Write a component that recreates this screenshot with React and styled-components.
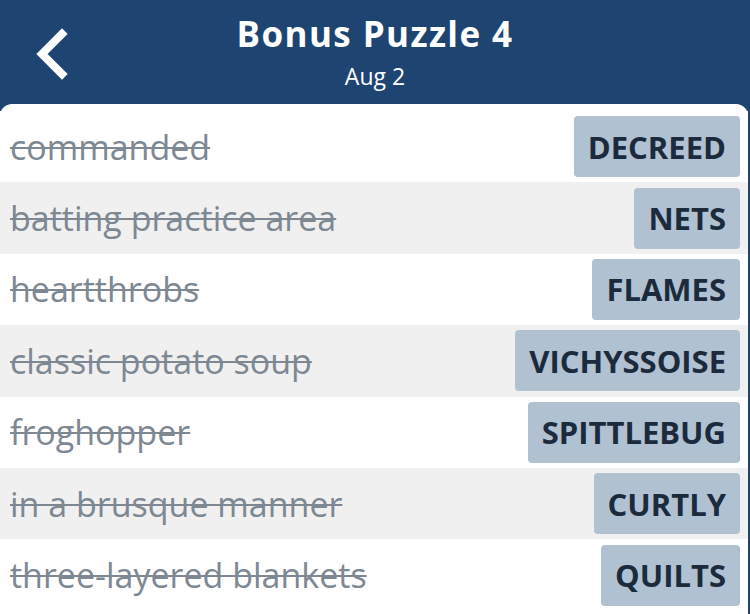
import React from "react";
import styled, { createGlobalStyle } from "styled-components";

const GlobalStyle = createGlobalStyle`
  html, body {
    margin: 0;
    padding: 0;
    background: #1e4571;
    font-family: "Open Sans", "Noto Sans", sans-serif;
  }
`;

const Screen = styled.div`
  width: 750px;
  height: 614px;
  overflow: hidden;
  background: #1e4571;
  display: flex;
  flex-direction: column;
`;

const Header = styled.header`
  height: 104px;
  display: flex;
  flex-direction: column;
  align-items: center;
  position: relative;
  color: #fff;
`;

const BackBtn = styled.button`
  position: absolute;
  left: 30px;
  top: 26px;
  width: 48px;
  height: 56px;
  border: none;
  background: none;
  padding: 0;
  cursor: pointer;
`;

const Title = styled.h1`
  margin: 11px 0 0 0;
  font-size: 35px;
  font-weight: 700;
  line-height: 46px;
  letter-spacing: 1.4px;
`;

const Sub = styled.div`
  font-size: 23px;
  line-height: 28px;
  margin-top: 5px;
`;

const Card = styled.main`
  flex: 1;
  width: 748px;
  background: #fff;
  border-radius: 12px 12px 0 0;
  padding-top: 7px;
`;

const Row = styled.div`
  height: 71.4px;
  box-sizing: border-box;
  display: flex;
  align-items: center;
  justify-content: space-between;
  padding: 0 8px 0 10px;
  background: ${(p) => (p.shade ? "#f0f0f0" : "#fff")};
`;

const Clue = styled.span`
  font-size: 34px;
  color: #7d8893;
  text-decoration: line-through;
  text-decoration-thickness: 2px;
`;

const Answer = styled.span`
  height: 61px;
  display: flex;
  align-items: center;
  padding: 0 14px;
  background: #b0c1d1;
  border-radius: 4px;
  font-size: 31px;
  font-weight: 700;
  color: #1b2b3c;
`;

const rows = [
  ["commanded", "DECREED"],
  ["batting practice area", "NETS"],
  ["heartthrobs", "FLAMES"],
  ["classic potato soup", "VICHYSSOISE"],
  ["froghopper", "SPITTLEBUG"],
  ["in a brusque manner", "CURTLY"],
  ["three-layered blankets", "QUILTS"],
];

const App = () => {
  return (
    <Screen>
      <GlobalStyle />
      <Header>
        <BackBtn aria-label="Back">
          <svg width="48" height="56" viewBox="0 0 48 56">
            <path
              d="M32 8 L12 28 L32 48"
              fill="none"
              stroke="#fff"
              strokeWidth="8"
              strokeLinecap="square"
            />
          </svg>
        </BackBtn>
        <Title>Bonus Puzzle 4</Title>
        <Sub>Aug 2</Sub>
      </Header>
      <Card>
        {rows.map(([clue, answer], i) => (
          <Row key={clue} shade={i % 2 === 1}>
            <Clue>{clue}</Clue>
            <Answer>{answer}</Answer>
          </Row>
        ))}
      </Card>
    </Screen>
  );
};

export default App;
